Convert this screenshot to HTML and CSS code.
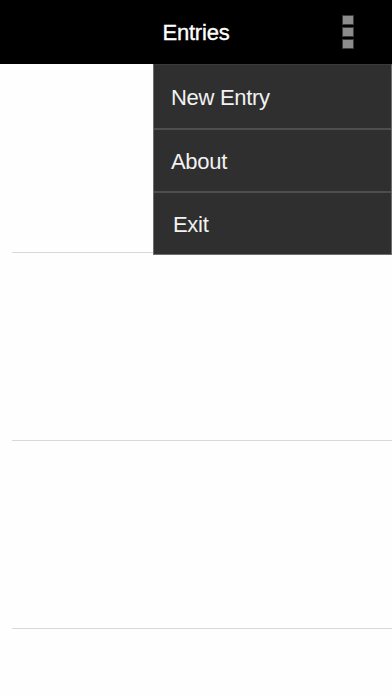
FILE: index.html
```html
<!DOCTYPE html>
<html>
<head>
<meta charset="utf-8">
<link rel="stylesheet" href="styles.css">
</head>
<body>
<div class="app">
  <header class="topbar">
    <span></span>
    <h1 class="title">Entries</h1>
    <button class="overflow" aria-label="More">
      <span class="dot"></span><span class="dot"></span><span class="dot"></span>
    </button>
  </header>
  <main class="list">
    <div class="row"></div>
    <div class="row"></div>
    <div class="row"></div>
  </main>
  <nav class="menu">
    <div class="menu-item">New Entry</div>
    <div class="menu-item">About</div>
    <div class="menu-item exit">Exit</div>
  </nav>
</div>
</body>
</html>
```
FILE: styles.css
```css
* { box-sizing: border-box; }
html, body { margin: 0; padding: 0; background: #ffffff; }
body { font-family: "Liberation Sans", Arial, sans-serif; }
.app { position: relative; width: 392px; height: 696px; overflow: hidden; background: #fefefe; }
.topbar {
  height: 64px;
  background: #000;
  display: grid;
  grid-template-columns: 1fr auto 1fr;
  align-items: center;
}
.title {
  margin: 0;
  color: #fff;
  font-size: 22px;
  font-weight: normal;
  letter-spacing: -0.2px;
  -webkit-text-stroke: 0.35px #fff;
  padding-top: 1px;
}
.overflow {
  justify-self: end;
  margin-right: 39px;
  padding: 0;
  border: 0;
  background: transparent;
  display: flex;
  flex-direction: column;
  gap: 4px;
}
.dot {
  display: block;
  width: 10px;
  height: 8px;
  background: #8c8c8c;
  outline: 1px solid #3a3a3a;
}
.list { display: flex; flex-direction: column; padding-top: 1px; }
.row {
  height: 188px;
  margin-left: 12px;
  border-bottom: 1px solid #d8d8d8;
}
.menu {
  position: absolute;
  top: 64px;
  left: 153px;
  right: 0;
  background: #2f2f2f;
  border: 1px solid #6e6e6e;
  border-top: 1px solid #3a3a3a;
  display: flex;
  flex-direction: column;
}
.menu-item {
  height: 63px;
  display: flex;
  align-items: center;
  padding-left: 17px;
  padding-top: 2px;
  color: #f2f2f2;
  font-size: 22px;
  letter-spacing: -0.3px;
}
.menu-item + .menu-item { border-top: 2px solid #4e4e4e; }
.exit { padding-left: 19px; }
```
